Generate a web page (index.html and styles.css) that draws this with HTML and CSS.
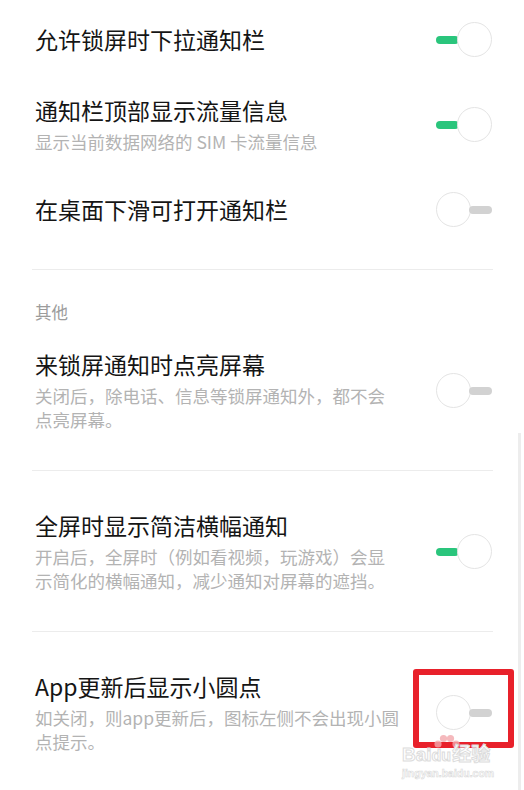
FILE: index.html
```html
<!DOCTYPE html>
<html lang="zh-CN">
<head>
    <meta charset="UTF-8">
    <meta name="viewport" content="width=device-width, initial-scale=1.0">
    <title>通知与状态栏</title>
    <link rel="stylesheet" href="styles.css">
</head>
<body>
    <div class="page">
        <div class="list">
            <div class="group group-top">
                <div class="item">
                    <div class="text">
                        <div class="title">允许锁屏时下拉通知栏</div>
                    </div>
                    <span class="switch on"><span class="track"></span><span class="knob"></span></span>
                </div>
                <div class="item">
                    <div class="text">
                        <div class="title">通知栏顶部显示流量信息</div>
                        <div class="sub">显示当前数据网络的 SIM 卡流量信息</div>
                    </div>
                    <span class="switch on"><span class="track"></span><span class="knob"></span></span>
                </div>
                <div class="item">
                    <div class="text">
                        <div class="title">在桌面下滑可打开通知栏</div>
                    </div>
                    <span class="switch off"><span class="track"></span><span class="knob"></span></span>
                </div>
            </div>

            <div class="divider"></div>
            <div class="section">其他</div>

            <div class="item">
                <div class="text">
                    <div class="title">来锁屏通知时点亮屏幕</div>
                    <div class="sub">关闭后，除电话、信息等锁屏通知外，都不会点亮屏幕。</div>
                </div>
                <span class="switch off"><span class="track"></span><span class="knob"></span></span>
            </div>

            <div class="divider"></div>

            <div class="item">
                <div class="text">
                    <div class="title">全屏时显示简洁横幅通知</div>
                    <div class="sub">开启后，全屏时（例如看视频，玩游戏）会显示简化的横幅通知，减少通知对屏幕的遮挡。</div>
                </div>
                <span class="switch on"><span class="track"></span><span class="knob"></span></span>
            </div>

            <div class="divider"></div>

            <div class="item">
                <div class="text">
                    <div class="title">App更新后显示小圆点</div>
                    <div class="sub">如关闭，则app更新后，图标左侧不会出现小圆点提示。</div>
                </div>
                <span class="switch off"><span class="track"></span><span class="knob"></span></span>
            </div>
        </div>

        <!-- overlays on the screenshot -->
        <div class="scrollbar"></div>
        <div class="highlight"></div>
        <div class="watermark">
            <svg class="paw" width="34" height="16" viewBox="0 0 34 16">
                <circle cx="8" cy="10" r="3.6" fill="#f3a7ad" opacity="0.8"/>
                <circle cx="13.5" cy="4.5" r="3.6" fill="#f3a7ad" opacity="0.8"/>
                <circle cx="20.5" cy="4.5" r="3.6" fill="#f3a7ad" opacity="0.8"/>
                <circle cx="26" cy="10" r="3.6" fill="#f3a7ad" opacity="0.8"/>
            </svg>
            <div class="wm-logo">Bai<span class="wm-du">du</span>经验</div>
            <div class="wm-url">jingyan.baidu.com</div>
        </div>
    </div>
</body>
</html>
```

FILE: styles.css
```css
body { margin: 0; background: #fff; font-family: "Noto Sans CJK SC", "Noto Sans", sans-serif; }
.page { position: relative; width: 524px; height: 790px; overflow: hidden; background: #fff; }
.list { padding-top: 4px; }
.group-top { padding-bottom: 6px; }

.item { display: flex; align-items: center; justify-content: space-between; padding: 20px 32px 20px 35px; }
.text { flex: 1; }
.title { font-size: 23px; line-height: 31px; color: #151515; }
.sub { max-width: 366px; margin-top: 4px; font-size: 17.5px; line-height: 24px; color: #b3b3b3; }

.divider { height: 1px; background: #ececec; margin: 18px 31px 19px 32px; }
.section { padding: 11px 35px 5px; font-size: 16.5px; line-height: 24px; color: #9c9c9c; }

.switch { display: flex; align-items: center; width: 56px; margin: -4px 0; }
.switch.off { flex-direction: row-reverse; }
.track { width: 23px; height: 8px; border-radius: 4px; background: #2ac57c; }
.switch.off .track { background: #d2d2d2; }
.knob { width: 35px; height: 35px; box-sizing: border-box; border-radius: 50%; border: 1px solid #e4e4e4; background: #fff; margin-left: -2px; }
.switch.off .knob { margin-left: 0; margin-right: -2px; }

.scrollbar { position: absolute; left: 518px; top: 433px; width: 3px; bottom: 0; background: #ededed; }
.highlight { position: absolute; left: 413px; top: 669px; width: 101px; height: 79px; box-sizing: border-box; border: 6px solid #e8212b; border-radius: 3px; }

.watermark { position: absolute; left: 400px; top: 734px; width: 96px; white-space: nowrap; }
.paw { display: block; margin: 0 0 -6px 30px; }
.wm-logo { font-family: "Liberation Sans", "Noto Sans CJK SC", sans-serif; font-weight: bold; font-size: 19px; line-height: 22px; color: #fff; -webkit-text-stroke: 1px #dcdcdc; padding-left: 2px; }
.wm-du { font-size: 16px; margin-right: 1px; }
.wm-url { font-family: "Liberation Sans", sans-serif; font-weight: bold; font-size: 10.5px; line-height: 12px; color: #fff; -webkit-text-stroke: 0.6px #dadada; padding-left: 2px; }
```
